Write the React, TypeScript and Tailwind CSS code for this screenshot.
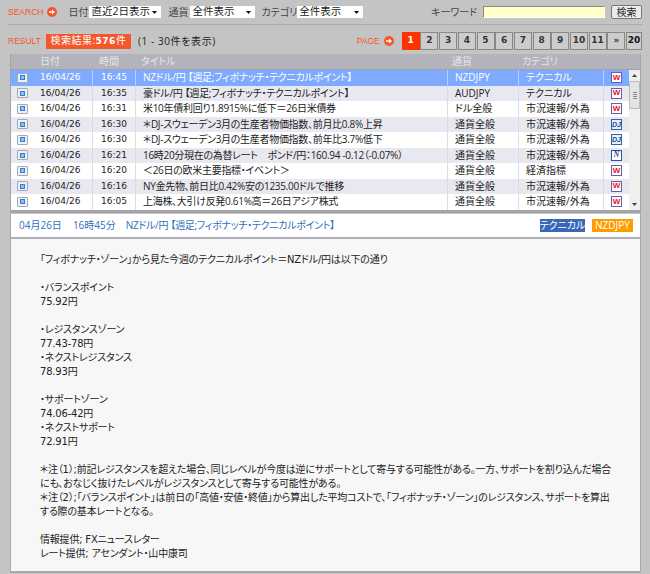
const rows = [
  { t: "16:45", title: "NZドル/円 【週足;フィボナッチ・テクニカルポイント】", cur: "NZDJPY", cat: "テクニカル", src: "W" },
  { t: "16:35", title: "豪ドル/円 【週足;フィボナッチ・テクニカルポイント】", cur: "AUDJPY", cat: "テクニカル", src: "W" },
  { t: "16:31", title: "米10年債利回り1.8915%に低下\uFF1D26日米債券", cur: "ドル全般", cat: "市況速報/外為", src: "W" },
  { t: "16:30", title: "\uFF0ADJ-スウェーデン3月の生産者物価指数、前月比0.8%上昇", cur: "通貨全般", cat: "市況速報/外為", src: "DJ" },
  { t: "16:30", title: "\uFF0ADJ-スウェーデン3月の生産者物価指数、前年比3.7%低下", cur: "通貨全般", cat: "市況速報/外為", src: "DJ" },
  { t: "16:21", title: "16時20分現在の為替レート\u3000ポンド/円\uFF1A160.94 -0.12\uFF08-0.07%\uFF09", cur: "通貨全般", cat: "市況速報/外為", src: "N" },
  { t: "16:20", title: "\uFF1C26日の欧米主要指標・イベント\uFF1E", cur: "通貨全般", cat: "経済指標", src: "W" },
  { t: "16:16", title: "NY金先物、前日比0.42%安の1235.00ドルで推移", cur: "通貨全般", cat: "市況速報/外為", src: "W" },
  { t: "16:05", title: "上海株、大引け反発0.61%高\uFF1D26日アジア株式", cur: "通貨全般", cat: "市況速報/外為", src: "W" },
];

const pages = ["2", "3", "4", "5", "6", "7", "8", "9", "10", "11", "»"];

const body = [
  "「フィボナッチ・ゾーン」から見た今週のテクニカルポイント\uFF1DNZドル/円は以下の通り",
  "",
  "・バランスポイント",
  "75.92円",
  "",
  "・レジスタンスゾーン",
  "77.43-78円",
  "・ネクストレジスタンス",
  "78.93円",
  "",
  "・サポートゾーン",
  "74.06-42円",
  "・ネクストサポート",
  "72.91円",
  "",
  "\uFF0A注\uFF081\uFF09;前記レジスタンスを超えた場合、同じレベルが今度は逆にサポートとして寄与する可能性がある。一方、サポートを割り込んだ場合",
  "にも、おなじく抜けたレベルがレジスタンスとして寄与する可能性がある。",
  "\uFF0A注\uFF082\uFF09;「バランスポイント」は前日の「高値・安値・終値」から算出した平均コストで、「フィボナッチ・ゾーン」のレジスタンス、サポートを算出",
  "する際の基本レートとなる。",
  "",
  "情報提供; FXニュースレター",
  "レート提供; アセンダント・山中康司",
];

function Arrow() {
  return (
    <svg width="10" height="10" viewBox="0 0 10 10" className="shrink-0">
      <circle cx="5" cy="5" r="5" fill="#f4572b" />
      <path d="M2 4.2h3V2.4L8 5 5 7.6V5.8H2z" fill="#fff" />
    </svg>
  );
}

function FakeSelect({ label, w }: { label: string; w: string }) {
  return (
    <div className={`flex h-[12px] items-center justify-between whitespace-nowrap bg-white pl-[2px] pr-[4px] text-[10.5px] text-[#222] ${w}`}>
      <span>{label}</span>
      <svg width="5" height="3" viewBox="0 0 5 3" className="shrink-0"><path d="M0 0h5L2.5 3z" fill="#111" /></svg>
    </div>
  );
}

function SourceIcon({ src }: { src: string }) {
  if (src === "W") {
    return (
      <span className="flex h-[11px] w-[11px] items-center justify-center border border-[#6a5fa8] bg-white font-['Liberation_Sans'] text-[8px] font-bold leading-none text-[#e8112d]">
        W
      </span>
    );
  }
  if (src === "DJ") {
    return (
      <span className="flex h-[11px] w-[11px] items-center justify-center border border-[#2f66a8] bg-[#e6eef8] font-['Liberation_Sans'] text-[7px] font-bold italic leading-none text-[#1f4f8f]">
        DJ
      </span>
    );
  }
  return (
    <span className="flex h-[11px] w-[11px] items-center justify-center border border-[#2f4fa8] bg-white font-['Liberation_Serif'] text-[8px] font-bold italic leading-none text-[#1f3f9f]">
      N
    </span>
  );
}

function DocIcon() {
  return (
    <span className="flex h-[10px] w-[11px] items-center justify-center rounded-[1px] border border-[#a4a9b0] bg-[#eef1f5]">
      <span className="h-[5px] w-[5px] border border-[#2f80d8] bg-[#8cc0f0]" />
    </span>
  );
}

function Scrollbar() {
  return (
    <div className="flex w-[11px] flex-col items-center bg-[#efefef]">
      <svg width="5" height="3" viewBox="0 0 5 3" className="mt-[4px]"><path d="M0 3h5L2.5 0z" fill="#444" /></svg>
      <div className="mt-[4px] flex h-[28px] w-[11px] flex-col items-center justify-center gap-[1px] rounded-[1px] border border-[#bbb] bg-[#e4e4e4]">
        <span className="h-px w-[4px] bg-[#888]" />
        <span className="h-px w-[4px] bg-[#888]" />
        <span className="h-px w-[4px] bg-[#888]" />
        <span className="h-px w-[4px] bg-[#888]" />
      </div>
      <svg width="5" height="3" viewBox="0 0 5 3" className="mb-[4px] mt-auto"><path d="M0 0h5L2.5 3z" fill="#444" /></svg>
    </div>
  );
}

export default function App() {
  return (
    <div className="h-[574px] w-[650px] overflow-hidden bg-[#c4c4c4] font-['Open_Sans','Noto_Sans_CJK_JP',sans-serif] text-[10px] text-[#222] [font-feature-settings:'palt']">
      <div className="flex h-[24px] items-center pl-[8px] pr-[8px]">
        <span className="mr-[4px] font-['Liberation_Sans'] text-[8.5px] text-[#f4572b]">SEARCH</span>
        <Arrow />
        <span className="ml-[11px] mr-[1px] text-[#444]">日付</span>
        <FakeSelect label="直近2日表示" w="w-[72px]" />
        <span className="ml-[7px] mr-[2px] text-[#444]">通貨</span>
        <FakeSelect label="全件表示" w="w-[65px]" />
        <span className="ml-[6px] text-[#444]">カテゴリ</span>
        <FakeSelect label="全件表示" w="w-[66px]" />
        <span className="ml-auto mr-[6px] text-[#444]">キーワード</span>
        <div className="h-[12px] w-[122px] border border-[#888] border-b-white border-r-white bg-[#ffffc8]" />
        <div className="ml-[6px] flex h-[14px] w-[31px] items-center justify-center rounded-[2px] border border-[#777] bg-[#ececec] text-[#222]">検索</div>
      </div>
      <div className="mx-[8px] h-px bg-[#aaa]" />
      <div className="flex h-[29px] items-center pl-[8px] pr-[8px] pt-[3px]">
        <span className="mr-[5px] font-['Liberation_Sans'] text-[8.5px] text-[#f4572b]">RESULT</span>
        <span className="flex h-[15px] w-[85px] items-center justify-center bg-[#f4572b] text-[10px] tracking-[0.5px] text-white">
          <span>検索結果:<b className="font-['DejaVu_Sans','Noto_Sans_CJK_JP'] text-[9px]">576</b>件</span>
        </span>
        <span className="ml-[7px] tracking-[0.6px]">(1 - 30件を表示)</span>
        <span className="ml-auto mr-[4px] font-['Liberation_Sans'] text-[8.5px] text-[#f4572b]">PAGE</span>
        <Arrow />
        <div className="ml-[8px] flex gap-[0.7px]">
          <span className="flex h-[18px] w-[18px] items-center justify-center bg-[#ff3300] font-['DejaVu_Sans'] text-[9px] font-bold text-white">1</span>
          {pages.map((p) => (
            <span key={p} className="flex h-[18px] w-[18px] items-center justify-center border border-[#888] bg-[#ccc] font-['DejaVu_Sans'] text-[9px] font-bold text-[#333]">
              {p}
            </span>
          ))}
          <span className="flex h-[18px] w-[16px] items-center justify-center border border-[#888] bg-[#ccc] font-['DejaVu_Sans'] text-[9px] font-bold text-[#111]">20</span>
        </div>
      </div>

      <div className="ml-[10px] w-[631px] border-x border-b-[3px] border-[#a2a2a8]">
        <div className="flex h-[16px] items-center border-b-[1px] border-[#a2a2a8] bg-[#b3b3bb] text-[#e6e6ea]">
          <span className="ml-[29px] w-[59px]">日付</span>
          <span className="w-[42px]">時間</span>
          <span className="w-[311px]">タイトル</span>
          <span className="w-[70px]">通貨</span>
          <span>カテゴリ</span>
        </div>
        <div className="flex bg-white">
          <div className="w-[618px]">
            {rows.map((r, i) => {
              const sel = i === 0;
              const bg = sel ? "bg-[#7eaaff] text-white" : i % 2 === 1 ? "bg-[#e8e8f0]" : "bg-white";
              const div = sel ? "border-[#b8d0ff]" : "border-[#dcdce2]";
              return (
                <div key={i} className={`flex h-[15.5px] items-center leading-[15.5px] ${bg}`}>
                  <div className="flex w-[23px] justify-center"><DocIcon /></div>
                  <div className={`w-[59px] border-r ${div} pl-[6px] font-['DejaVu_Sans'] text-[9px]`}>16/04/26</div>
                  <div className={`w-[43px] border-r ${div} pl-[8px] font-['DejaVu_Sans'] text-[9px]`}>{r.t}</div>
                  <div className={`w-[312px] border-r ${div} truncate pl-[7px] tracking-[-0.3px]`}>{r.title}</div>
                  <div className={`w-[71px] border-r ${div} pl-[7px]`}>{r.cur}</div>
                  <div className={`w-[85px] border-r ${div} pl-[7px]`}>{r.cat}</div>
                  <div className="flex w-[25px] justify-center"><SourceIcon src={r.src} /></div>
                </div>
              );
            })}
          </div>
          <Scrollbar />
        </div>
      </div>

      <div className="ml-[10px] mt-px h-[359px] w-[631px] border-x-[1px] border-b-[2px] border-[#a8a8ae] bg-white">
        <div className="flex h-[25px] items-center border-b-[2px] border-[#b0b0b6] pl-[8px] pr-[7px] text-[#2f6fc0]">
          <span>04月26日</span>
          <span className="ml-[11px]">16時45分</span>
          <span className="ml-[10px] tracking-[-0.3px]">NZドル/円 【週足;フィボナッチ・テクニカルポイント】</span>
          <span className="ml-auto flex h-[13px] w-[45px] items-center justify-center whitespace-nowrap bg-[#3a66b8] text-white">テクニカル</span>
          <span className="ml-[7px] flex h-[13px] w-[41px] items-center justify-center bg-[#ff9c00] text-white">NZDJPY</span>
        </div>
        <div className="h-[332px] bg-[#f7f7f7] pl-[29px] pt-[14px] font-['DejaVu_Sans','Noto_Sans_CJK_JP',sans-serif] leading-[14px] tracking-[-0.2px]">
          {body.map((l, i) => (
            <div key={i} className="h-[14px] whitespace-nowrap">{l}</div>
          ))}
        </div>
      </div>
    </div>
  );
}
